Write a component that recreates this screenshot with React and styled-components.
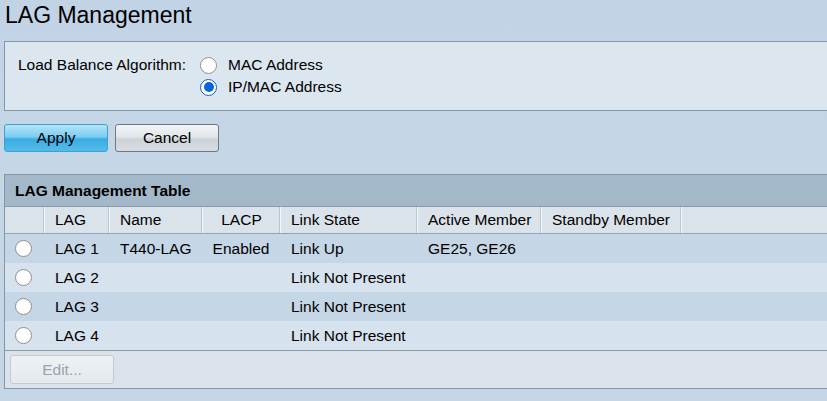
import React, { useState } from "react";
import styled, { createGlobalStyle } from "styled-components";

const rows = [
  { lag: "LAG 1", name: "T440-LAG", lacp: "Enabled", state: "Link Up", active: "GE25, GE26", standby: "" },
  { lag: "LAG 2", name: "", lacp: "", state: "Link Not Present", active: "", standby: "" },
  { lag: "LAG 3", name: "", lacp: "", state: "Link Not Present", active: "", standby: "" },
  { lag: "LAG 4", name: "", lacp: "", state: "Link Not Present", active: "", standby: "" },
];

const columns = ["LAG", "Name", "LACP", "Link State", "Active Member", "Standby Member"];

export default function App() {
  const [algorithm, setAlgorithm] = useState("ipmac");
  const [selected, setSelected] = useState(null);

  return (
    <Page>
      <GlobalStyle />
      <Title>LAG Management</Title>

      <SettingsPanel>
        <FieldLabel>Load Balance Algorithm:</FieldLabel>
        <RadioList>
          <RadioRow onClick={() => setAlgorithm("mac")}>
            <Radio checked={algorithm === "mac"} />
            MAC Address
          </RadioRow>
          <RadioRow onClick={() => setAlgorithm("ipmac")}>
            <Radio checked={algorithm === "ipmac"} />
            IP/MAC Address
          </RadioRow>
        </RadioList>
      </SettingsPanel>

      <ButtonBar>
        <Button primary>Apply</Button>
        <Button>Cancel</Button>
      </ButtonBar>

      <TablePanel>
        <TableTitle>LAG Management Table</TableTitle>
        <HeaderRow>
          <HeadCell />
          {columns.map((c) => (
            <HeadCell key={c} center={c === "LACP"}>
              {c}
            </HeadCell>
          ))}
          <HeadCell />
        </HeaderRow>
        {rows.map((r, i) => (
          <DataRow key={r.lag} odd={i % 2 === 0} onClick={() => setSelected(i)}>
            <RadioCell>
              <Radio checked={selected === i} />
            </RadioCell>
            <Cell>{r.lag}</Cell>
            <Cell>{r.name}</Cell>
            <Cell center>{r.lacp}</Cell>
            <Cell>{r.state}</Cell>
            <Cell>{r.active}</Cell>
            <Cell>{r.standby}</Cell>
            <Cell />
          </DataRow>
        ))}
        <Footer>
          <EditButton disabled>Edit...</EditButton>
        </Footer>
      </TablePanel>
    </Page>
  );
}

const GlobalStyle = createGlobalStyle`
  body {
    margin: 0;
    overflow: hidden;
    background: #c5d6e6;
    font-family: "Liberation Sans", Arial, sans-serif;
  }
`;

const Page = styled.div`
  width: 827px;
  height: 401px;
  background: linear-gradient(180deg, #c1d3e5 0%, #c5d6e6 40%, #c5d6e6 100%);
  color: #000;
  font-size: 15.5px;
`;

const Title = styled.h1`
  margin: 0;
  padding: 2px 0 13px 5px;
  font-size: 23px;
  font-weight: normal;
  line-height: 26px;
`;

const SettingsPanel = styled.div`
  display: flex;
  align-items: flex-start;
  margin-left: 4px;
  padding: 12px 0 12px 13px;
  background: #dbe6ef;
  border: 1px solid #8397a8;
  border-right: none;
`;

const FieldLabel = styled.div`
  width: 182px;
  line-height: 22px;
`;

const RadioList = styled.div`
  display: flex;
  flex-direction: column;
`;

const RadioRow = styled.label`
  display: flex;
  align-items: center;
  gap: 11px;
  height: 22px;
  cursor: pointer;
`;

const Radio = styled.span`
  box-sizing: border-box;
  display: inline-flex;
  align-items: center;
  justify-content: center;
  width: 17px;
  height: 17px;
  border-radius: 50%;
  background: #fff;
  border: ${(p) => (p.checked ? "1.5px solid #0b5fd6" : "1px solid #8f8f8f")};
  flex-shrink: 0;

  &::after {
    content: "";
    display: ${(p) => (p.checked ? "block" : "none")};
    width: 10px;
    height: 10px;
    border-radius: 50%;
    background: #0b62d9;
  }
`;

const ButtonBar = styled.div`
  display: flex;
  gap: 7px;
  margin: 13px 0 0 4px;
  height: 28px;
`;

const Button = styled.button`
  box-sizing: border-box;
  width: 104px;
  height: 28px;
  padding: 0;
  border-radius: 3px;
  font-family: inherit;
  font-size: 15.5px;
  color: #000;
  cursor: pointer;
  border: 1px solid ${(p) => (p.primary ? "#3c9fd6" : "#6e7881")};
  background: ${(p) =>
    p.primary
      ? "linear-gradient(180deg, #b4e3f8 0%, #7ccdf0 45%, #39ade4 55%, #55bbe9 100%)"
      : "linear-gradient(180deg, #f3f5f7 0%, #e1e6ea 45%, #ccd3d9 55%, #d6dce1 100%)"};
`;

const TablePanel = styled.div`
  margin: 22px 0 0 4px;
  border: 1px solid #8397a8;
  border-right: none;
`;

const TableTitle = styled.div`
  height: 31px;
  line-height: 31px;
  padding-left: 10px;
  background: #a3b8c8;
  font-weight: bold;
  border-bottom: 1px solid #8a9cab;
`;

const gridColumns = "39px 65px 93px 78px 137px 124px 140px 1fr";

const HeaderRow = styled.div`
  display: grid;
  grid-template-columns: ${gridColumns};
  height: 26px;
  background: #dae2ea;
  border-bottom: 1px solid #93a4b1;
`;

const HeadCell = styled.div`
  box-sizing: border-box;
  line-height: 26px;
  padding-left: ${(p) => (p.center ? "0" : "10px")};
  text-align: ${(p) => (p.center ? "center" : "left")};
  white-space: nowrap;

  & + & {
    border-left: 1px solid #f4f7fa;
    box-shadow: inset 1px 0 0 #dae2ea, -1px 0 0 #b9c6d0;
  }
`;

const DataRow = styled.div`
  display: grid;
  grid-template-columns: ${gridColumns};
  height: 29px;
  background: ${(p) => (p.odd ? "#c5d6e6" : "#d6e2ee")};
  cursor: pointer;
`;

const Cell = styled.div`
  line-height: 29px;
  padding-left: ${(p) => (p.center ? "0" : "11px")};
  text-align: ${(p) => (p.center ? "center" : "left")};
  white-space: nowrap;
`;

const RadioCell = styled.div`
  display: flex;
  align-items: center;
  padding-left: 10px;
`;

const Footer = styled.div`
  height: 38px;
  box-sizing: border-box;
  padding: 4px 0 0 5px;
  background: #dbe2e9;
  border-top: 1px solid #8a9aa6;
`;

const EditButton = styled.button`
  box-sizing: border-box;
  width: 104px;
  height: 29px;
  padding: 0;
  border-radius: 3px;
  border: 1px solid #c3cbd2;
  background: linear-gradient(180deg, #eef2f5 0%, #e4e9ee 100%);
  font-family: inherit;
  font-size: 15.5px;
  color: #9aa3ab;
`;
